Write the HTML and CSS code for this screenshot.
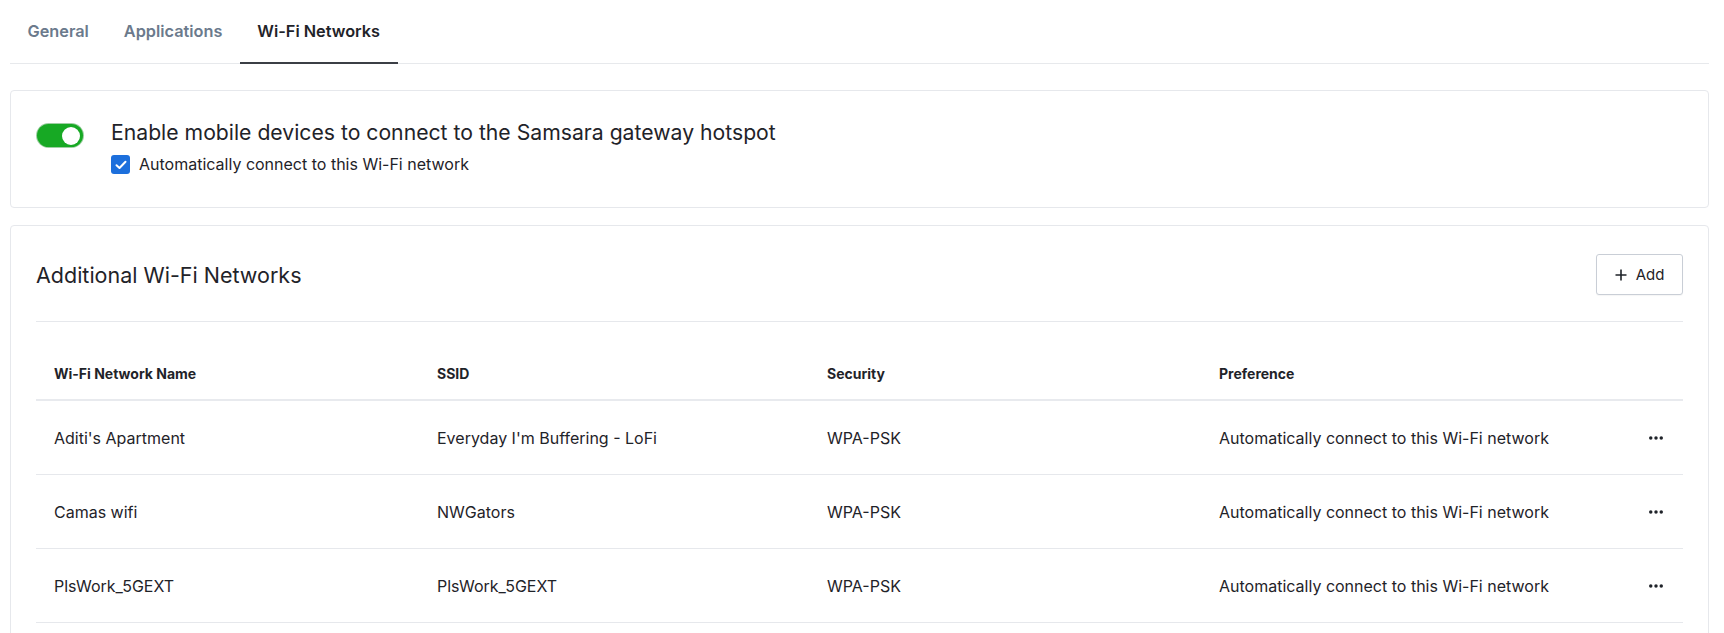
FILE: index.html
```html
<!DOCTYPE html>
<html lang="en">
<head>
<meta charset="utf-8">
<title>Wi-Fi Networks</title>
<link rel="stylesheet" href="styles.css">
</head>
<body>
<div class="page">
  <nav class="tabs">
    <div class="tab">General</div>
    <div class="tab">Applications</div>
    <div class="tab active">Wi-Fi Networks</div>
  </nav>

  <section class="card hotspot">
    <div class="toggle"><span class="knob"></span></div>
    <div class="hotspot-text">
      <div class="hotspot-title">Enable mobile devices to connect to the Samsara gateway hotspot</div>
      <label class="check-row">
        <span class="checkbox">
          <svg width="12" height="10" viewBox="0 0 12 10"><path d="M1.5 5.2 L4.5 8 L10.5 1.8" fill="none" stroke="#fff" stroke-width="2" stroke-linecap="round" stroke-linejoin="round"/></svg>
        </span>
        <span>Automatically connect to this Wi-Fi network</span>
      </label>
    </div>
  </section>

  <section class="card networks">
    <div class="networks-head">
      <h2 class="networks-title">Additional Wi-Fi Networks</h2>
      <button class="add-btn">
        <svg width="12" height="12" viewBox="0 0 12 12"><path d="M6 0.5 V11.5 M0.5 6 H11.5" stroke="#1f2329" stroke-width="1.6" fill="none"/></svg>
        <span>Add</span>
      </button>
    </div>
    <div class="table">
      <div class="row head">
        <div class="cell">Wi-Fi Network Name</div>
        <div class="cell">SSID</div>
        <div class="cell">Security</div>
        <div class="cell">Preference</div>
        <div class="cell"></div>
      </div>
      <div class="row">
        <div class="cell">Aditi's Apartment</div>
        <div class="cell">Everyday I'm Buffering - LoFi</div>
        <div class="cell">WPA-PSK</div>
        <div class="cell">Automatically connect to this Wi-Fi network</div>
        <div class="cell actions"><svg width="14" height="4" viewBox="0 0 14 4"><circle cx="1.75" cy="2" r="1.75"/><circle cx="7" cy="2" r="1.75"/><circle cx="12.25" cy="2" r="1.75"/></svg></div>
      </div>
      <div class="row">
        <div class="cell">Camas wifi</div>
        <div class="cell">NWGators</div>
        <div class="cell">WPA-PSK</div>
        <div class="cell">Automatically connect to this Wi-Fi network</div>
        <div class="cell actions"><svg width="14" height="4" viewBox="0 0 14 4"><circle cx="1.75" cy="2" r="1.75"/><circle cx="7" cy="2" r="1.75"/><circle cx="12.25" cy="2" r="1.75"/></svg></div>
      </div>
      <div class="row">
        <div class="cell">PlsWork_5GEXT</div>
        <div class="cell">PlsWork_5GEXT</div>
        <div class="cell">WPA-PSK</div>
        <div class="cell">Automatically connect to this Wi-Fi network</div>
        <div class="cell actions"><svg width="14" height="4" viewBox="0 0 14 4"><circle cx="1.75" cy="2" r="1.75"/><circle cx="7" cy="2" r="1.75"/><circle cx="12.25" cy="2" r="1.75"/></svg></div>
      </div>
    </div>
  </section>
</div>
</body>
</html>
```
FILE: styles.css
```css
* { box-sizing: border-box; }
html, body { margin: 0; padding: 0; background: #fff; }
body {
  font-family: Inter, "Noto Sans", sans-serif;
  color: #1f2329;
  font-size: 16px;
}
.page { padding: 0 15px 0 10px; }

/* Tabs */
.tabs {
  display: flex;
  border-bottom: 1px solid #e7e9ec;
}
.tab {
  padding: 20px 17.5px 20px;
  line-height: 22px;
  font-size: 16.3px;
  font-weight: 600;
  color: #6b7a8c;
  border-bottom: 2px solid transparent;
  margin-bottom: -1px;
}
.tab.active {
  color: #1f2329;
  border-bottom-color: #3b3f45;
}

/* Cards */
.card {
  border: 1px solid #e6e8ec;
  border-radius: 4px;
  background: #fff;
}
.hotspot {
  margin-top: 26px;
  display: flex;
  align-items: flex-start;
  gap: 28px;
  padding: 27px 25px 32px 26px;
  height: 118px;
}
.toggle {
  width: 46px;
  height: 23px;
  margin-top: 6px;
  border-radius: 12px;
  background: #17a924;
  box-shadow: 0 0 0 1px #9fcfa3;
  display: flex;
  align-items: center;
  justify-content: flex-end;
  padding-right: 3px;
  flex: none;
}
.knob {
  width: 18px;
  height: 18px;
  border-radius: 50%;
  background: #fff;
}
.hotspot-title {
  font-size: 21.2px;
  line-height: 28px;
}
.check-row {
  margin-top: 8px;
  display: flex;
  align-items: center;
  gap: 9px;
  line-height: 21px;
  font-size: 16px;
}
.checkbox {
  width: 19px;
  height: 19px;
  border-radius: 3px;
  background: #1c6fdc;
  display: flex;
  align-items: center;
  justify-content: center;
}

/* Networks */
.networks {
  margin-top: 17px;
  padding: 28px 25px 40px;
}
.networks-head {
  display: flex;
  align-items: center;
  justify-content: space-between;
  padding-bottom: 26px;
  border-bottom: 1px solid #e6e8ec;
}
.networks-title {
  margin: 0;
  font-size: 21.5px;
  font-weight: 400;
  line-height: 28px;
}
.add-btn {
  height: 41px;
  width: 87px;
  display: flex;
  align-items: center;
  justify-content: center;
  gap: 9px;
  font-family: inherit;
  font-size: 15px;
  color: #1f2329;
  background: #fff;
  border: 1px solid #c9ced6;
  border-radius: 3px;
  box-shadow: 0 1px 1px rgba(0,0,0,0.04);
  padding: 0;
}

.table { margin-top: 23px; }
.row {
  display: grid;
  grid-template-columns: 383px 390px 392px 1fr 54px;
  align-items: center;
  height: 74px;
  border-bottom: 1px solid #e6e8ec;
  font-size: 16px;
}
.row.head {
  height: 56px;
  border-bottom: 2px solid #e8eaee;
  font-size: 14px;
  font-weight: 700;
  padding-top: 3px;
}
.cell { padding-left: 18px; }
.cell.actions {
  padding-left: 0;
  display: flex;
  justify-content: center;
  fill: #1f2329;
}
```
